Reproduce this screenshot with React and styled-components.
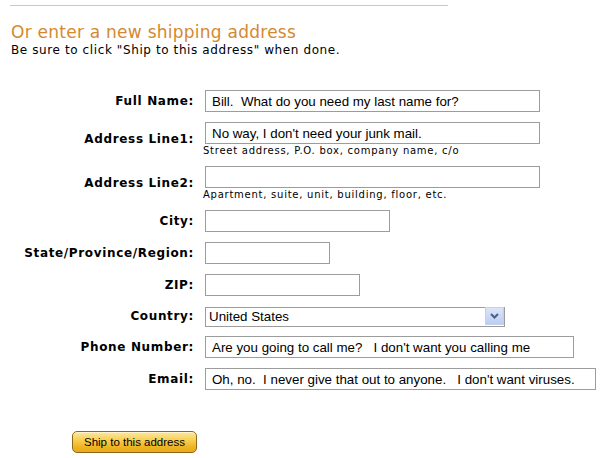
import React from "react";
import styled, { createGlobalStyle } from "styled-components";

const Global = createGlobalStyle`
  html, body { margin: 0; padding: 0; background: #fff; }
  body { font-family: "DejaVu Sans", Verdana, sans-serif; color: #000; }
`;

const Page = styled.div`
  padding: 5px 10px 0 10px;
  width: 590px;
`;

const Rule = styled.div`
  width: 438px;
  height: 1px;
  background: #cdc8ba;
`;

const Heading = styled.h2`
  margin: 16px 0 0 1px;
  font-family: "DejaVu Sans", Verdana, sans-serif;
  font-weight: normal;
  font-size: 17px;
  line-height: 20px;
  letter-spacing: 0.25px;
  color: #d4892f;
`;

const Sub = styled.p`
  margin: 1px 0 0 1px;
  font-size: 12px;
  line-height: 14px;
  letter-spacing: 0.6px;
`;

const Form = styled.form`
  margin-top: 33px;
  display: grid;
  grid-template-columns: 183px auto;
  column-gap: 12px;
  row-gap: 10px;
  align-items: center;
`;

const Label = styled.label`
  justify-self: end;
  margin-right: -1px;
  font-family: "DejaVu Sans", Verdana, sans-serif;
  font-weight: bold;
  font-size: 12px;
  line-height: 14px;
  letter-spacing: 0.65px;
  white-space: nowrap;
`;

const Cell = styled.div`
  display: flex;
  flex-direction: column;
  align-items: flex-start;
`;

const Input = styled.input`
  box-sizing: border-box;
  width: ${(p) => p.$w}px;
  height: 22px;
  margin: 0;
  padding: 0 6px;
  border: 1px solid #9c9c9c;
  border-radius: 0;
  background: #fff;
  font-family: "Liberation Sans", Arial, sans-serif;
  font-size: 13.33px;
  color: #000;
  outline: none;
`;

const Hint = styled.span`
  margin: 1px 0 0 -2px;
  font-size: 10px;
  line-height: 11px;
  letter-spacing: 0.75px;
  white-space: nowrap;
`;

const SelectWrap = styled.div`
  position: relative;
  width: 300px;
  height: 20px;
`;

const Select = styled.select`
  box-sizing: border-box;
  width: 100%;
  height: 20px;
  margin: 0;
  padding: 0 0 0 3px;
  border: 1px solid #9c9c9c;
  border-radius: 0;
  background: #fff;
  appearance: none;
  -webkit-appearance: none;
  font-family: "Liberation Sans", Arial, sans-serif;
  font-size: 13.33px;
  color: #000;
  outline: none;
`;

const Arrow = styled.span`
  position: absolute;
  top: 1px;
  right: 1px;
  width: 19px;
  height: 18px;
  box-sizing: border-box;
  border: 1px solid #c3d1ef;
  background: linear-gradient(#dbe5fb, #bccdf3);
  display: flex;
  align-items: center;
  justify-content: center;
  pointer-events: none;
`;

const ButtonRow = styled.div`
  margin-top: 41px;
  padding-left: 62px;
`;

const ShipButton = styled.button`
  box-sizing: border-box;
  width: 125px;
  height: 22px;
  padding: 0;
  border: 1px solid #8c6a1c;
  border-radius: 5px;
  background: linear-gradient(#fde8a0 0%, #f8cf52 40%, #f0b322 75%, #e8a91c 100%);
  box-shadow: inset 0 1px 0 #fff4cc;
  font-family: "Liberation Sans", Arial, sans-serif;
  font-size: 11.5px;
  color: #000;
  cursor: pointer;
`;

const fields = [
  { label: "Full Name:", w: 335, value: "Bill.  What do you need my last name for?" },
  { label: "Address Line1:", w: 335, value: "No way, I don't need your junk mail.", hint: "Street address, P.O. box, company name, c/o" },
  { label: "Address Line2:", w: 335, value: "", hint: "Apartment, suite, unit, building, floor, etc." },
  { label: "City:", w: 185, value: "" },
  { label: "State/Province/Region:", w: 125, value: "" },
  { label: "ZIP:", w: 155, value: "" },
  { label: "Country:", select: true },
  { label: "Phone Number:", w: 369, value: "Are you going to call me?   I don't want you calling me" },
  { label: "Email:", w: 391, value: "Oh, no.  I never give that out to anyone.   I don't want viruses." },
];

export default function App() {
  return (
    <Page>
      <Global />
      <Rule />
      <Heading>Or enter a new shipping address</Heading>
      <Sub>Be sure to click "Ship to this address" when done.</Sub>
      <Form onSubmit={(e) => e.preventDefault()}>
        {fields.map((f) => (
          <React.Fragment key={f.label}>
            <Label>{f.label}</Label>
            <Cell>
              {f.select ? (
                <SelectWrap>
                  <Select defaultValue="US">
                    <option value="US">United States</option>
                  </Select>
                  <Arrow>
                    <svg width="9" height="6" viewBox="0 0 9 6">
                      <path d="M1 1 L4.5 4.5 L8 1" fill="none" stroke="#4d5f86" strokeWidth="2" />
                    </svg>
                  </Arrow>
                </SelectWrap>
              ) : (
                <Input $w={f.w} defaultValue={f.value} />
              )}
              {f.hint && <Hint>{f.hint}</Hint>}
            </Cell>
          </React.Fragment>
        ))}
      </Form>
      <ButtonRow>
        <ShipButton type="button">Ship to this address</ShipButton>
      </ButtonRow>
    </Page>
  );
}
